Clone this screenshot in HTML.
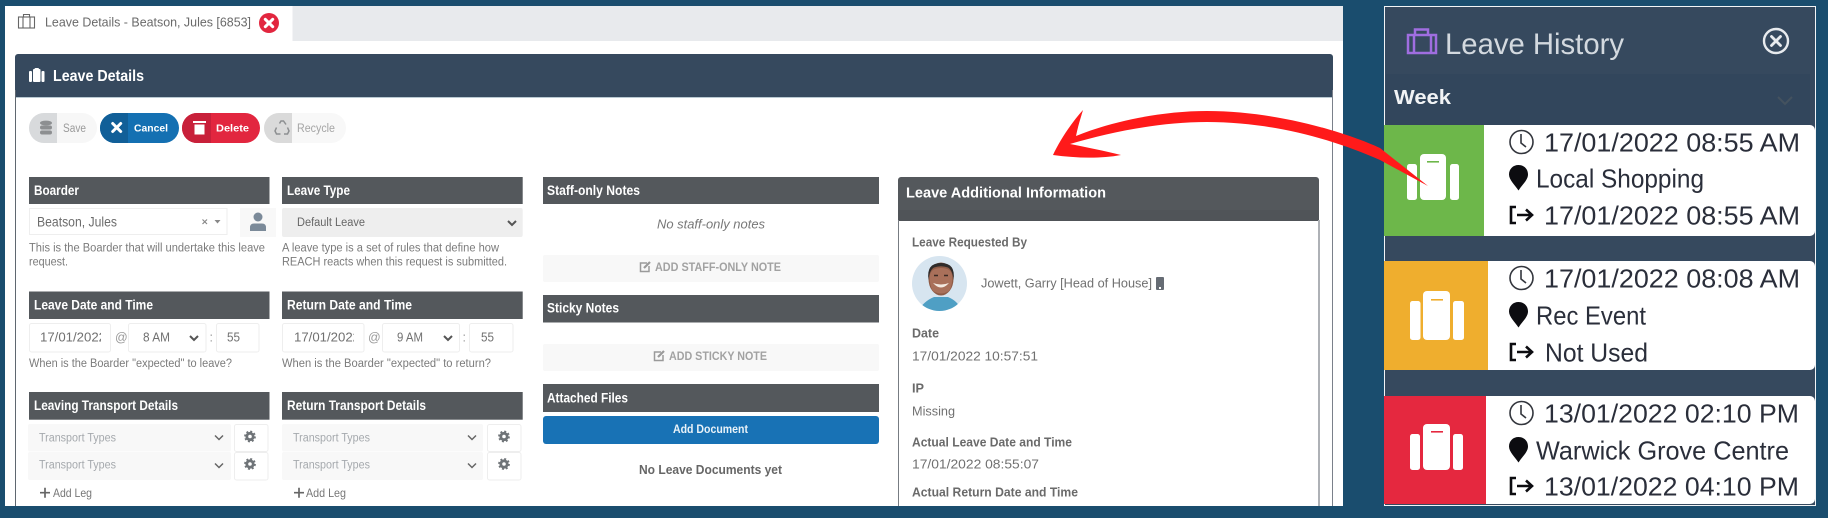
<!DOCTYPE html>
<html><head><meta charset="utf-8"><title>Leave Details</title>
<style>
html,body{margin:0;padding:0;width:1828px;height:518px;overflow:hidden;background:#1a4d6e}
svg{display:block;position:absolute;left:0;top:0;filter:blur(.35px)}
text{font-family:"Liberation Sans",sans-serif;white-space:pre}
.h{font-weight:bold;font-size:13.5px;fill:#fff}
.g{font-size:11.5px;fill:#7b7b7b}
.t{font-size:11.5px;fill:#a5a9ad}
.l{font-size:12.5px;fill:#6a6a6a;font-weight:bold}
.v{font-size:12.5px;fill:#707070}
.c{font-size:26px;fill:#2a2e3a}
.b{font-size:10.5px;font-weight:bold}
</style></head><body>
<svg width="1828" height="518" viewBox="0 0 1828 518" xmlns="http://www.w3.org/2000/svg">
<defs>
<clipPath id="d1"><rect x="29" y="323" width="72" height="29"/></clipPath>
<clipPath id="d2"><rect x="282" y="323" width="72" height="29"/></clipPath>
<clipPath id="av"><circle cx="939.5" cy="283.5" r="27.5"/></clipPath>
</defs>
<rect width="1828" height="518" fill="#1a4d6e"/>
<!-- left panel -->
<rect x="5" y="6" width="1338" height="500" fill="#fff"/>
<rect x="292.500" y="6" width="1050.500" height="35" fill="#e8eaed"/>
<!-- tab -->
<g fill="none" stroke="#666" stroke-width="1.100">
<rect x="18.500" y="17" width="16" height="11"/><path d="M23 17V28M30 17V28M23.500 17V14.500H29.500V17"/>
</g>
<text x="45" y="26.500" font-size="12.500" fill="#6a6a6a" textLength="206" lengthAdjust="spacingAndGlyphs">Leave Details - Beatson, Jules [6853]</text>
<circle cx="269" cy="23" r="10" fill="#e2263f"/>
<path d="M265.300 19.300L272.700 26.700M272.700 19.300L265.300 26.700" stroke="#fff" stroke-width="3" stroke-linecap="round"/>
<!-- main panel -->
<rect x="15" y="54" width="1318" height="44" rx="3" fill="#36495e"/>
<rect x="15" y="97" width="1318" height="1" fill="#b9c9d2"/>
<rect x="15" y="90" width="1" height="416" fill="#5f6770"/>
<rect x="1332" y="90" width="1" height="416" fill="#7a808a"/>
<g fill="#fff"><rect x="29" y="71" width="3" height="11" rx="1"/><rect x="33" y="69" width="7.500" height="13" rx="1"/><rect x="34.500" y="68" width="4.500" height="3" rx="1"/><rect x="41.500" y="71" width="3" height="11" rx="1"/></g>
<text x="53" y="81" font-size="15.500" font-weight="bold" fill="#fff" textLength="91" lengthAdjust="spacingAndGlyphs">Leave Details</text>
<!-- action buttons -->
<rect x="29" y="113" width="68" height="30" rx="15" fill="#f7f7f7"/><path d="M57 113H44a15 15 0 0 0 0 30H57Z" fill="#d8dadc"/>
<g fill="#8d8f91"><ellipse cx="46" cy="123" rx="6" ry="2.400"/><rect x="40" y="125.500" width="12" height="4" rx="2"/><rect x="40" y="130.500" width="12" height="4" rx="2"/></g>
<text x="63" y="132" font-size="11.500" fill="#9a9a9a" textLength="23" lengthAdjust="spacingAndGlyphs">Save</text>
<rect x="100" y="113" width="79" height="30" rx="15" fill="#1470b2"/><path d="M128 113H115a15 15 0 0 0 0 30H128Z" fill="#115f98"/>
<path d="M112.700 123.500L120.700 131.500M120.700 123.500L112.700 131.500" stroke="#fff" stroke-width="3" stroke-linecap="round"/>
<text class="b" x="134" y="131.500" fill="#fff" textLength="34" lengthAdjust="spacingAndGlyphs">Cancel</text>
<rect x="182" y="113" width="78" height="30" rx="15" fill="#e2263f"/><path d="M211 113H197a15 15 0 0 0 0 30H211Z" fill="#c8203a"/>
<path d="M193 121H206V123H193ZM194.500 124.500H204.500V134.500H194.500Z" fill="#fff"/>
<text class="b" x="216" y="131.500" fill="#fff" textLength="33" lengthAdjust="spacingAndGlyphs">Delete</text>
<rect x="264" y="113" width="82" height="30" rx="15" fill="#f8f8f8"/><path d="M292 113H279a15 15 0 0 0 0 30H292Z" fill="#dadada"/>
<path d="M279.500 123.500L281 121H283.500L286 124.500M287.500 127.500L289 131L287.500 134H284M280.500 134H276.500L275 131L276.500 127.500" fill="none" stroke="#8d8f91" stroke-width="1.500"/>
<text x="297" y="132" font-size="11.500" fill="#a5a5a5" textLength="38" lengthAdjust="spacingAndGlyphs">Recycle</text>

<!-- section headers -->
<g fill="#54585c">
<rect x="29" y="177" width="240.500" height="27"/><rect x="282" y="177" width="240.700" height="27"/><rect x="543" y="177" width="336" height="27"/>
<rect x="29" y="291.500" width="240.500" height="27.500"/><rect x="282" y="291.500" width="240.700" height="27.500"/><rect x="543" y="295" width="336" height="27.500"/>
<rect x="29" y="392" width="240.500" height="27.700"/><rect x="282" y="392" width="240.700" height="27.700"/><rect x="543" y="384" width="336" height="28"/>
</g>
<text class="h" x="34" y="195" textLength="45" lengthAdjust="spacingAndGlyphs">Boarder</text>
<text class="h" x="287" y="195" textLength="63" lengthAdjust="spacingAndGlyphs">Leave Type</text>
<text class="h" x="547" y="195" textLength="93" lengthAdjust="spacingAndGlyphs">Staff-only Notes</text>
<text class="h" x="34" y="309.500" textLength="119" lengthAdjust="spacingAndGlyphs">Leave Date and Time</text>
<text class="h" x="287" y="309.500" textLength="125" lengthAdjust="spacingAndGlyphs">Return Date and Time</text>
<text class="h" x="547" y="312.500" textLength="72" lengthAdjust="spacingAndGlyphs">Sticky Notes</text>
<text class="h" x="34" y="410" textLength="144" lengthAdjust="spacingAndGlyphs">Leaving Transport Details</text>
<text class="h" x="287" y="410" textLength="139" lengthAdjust="spacingAndGlyphs">Return Transport Details</text>
<text class="h" x="547" y="402.500" textLength="81" lengthAdjust="spacingAndGlyphs">Attached Files</text>

<!-- boarder row -->
<rect x="29.500" y="208.500" width="197.500" height="26" fill="#fff" stroke="#eee"/>
<text x="37" y="226.500" font-size="13.500" fill="#6c6c6c" textLength="80" lengthAdjust="spacingAndGlyphs">Beatson, Jules</text>
<path d="M202.500 219.500L207 224M207 219.500L202.500 224" stroke="#888" stroke-width="1.200"/>
<path d="M214.500 220H220.500L217.500 223.500Z" fill="#888"/>
<rect x="240" y="208" width="36" height="29" fill="#f8f8f8"/>
<circle cx="258" cy="217" r="4.500" fill="#7b8a99"/><path d="M250 231V227.500Q250 223.500 254 223.500H262Q266 223.500 266 227.500V231Z" fill="#7b8a99"/>
<rect x="282" y="208" width="240.700" height="29" rx="2" fill="#eeeeee"/>
<text x="297" y="226" font-size="11.500" fill="#666" textLength="68" lengthAdjust="spacingAndGlyphs">Default Leave</text>
<path d="M508 221L512 225L516 221" fill="none" stroke="#555" stroke-width="2"/>
<text class="g" x="29" y="251.500" textLength="236" lengthAdjust="spacingAndGlyphs">This is the Boarder that will undertake this leave</text>
<text class="g" x="29" y="265.500" textLength="39" lengthAdjust="spacingAndGlyphs">request.</text>
<text class="g" x="282" y="251.500" textLength="217" lengthAdjust="spacingAndGlyphs">A leave type is a set of rules that define how</text>
<text class="g" x="282" y="265.500" textLength="225" lengthAdjust="spacingAndGlyphs">REACH reacts when this request is submitted.</text>

<!-- date rows -->
<g fill="#fff" stroke="#eee">
<rect x="29.500" y="323.500" width="81" height="28.500" rx="2"/><rect x="128.500" y="323.500" width="77.500" height="28.500" rx="2"/><rect x="216.500" y="323.500" width="42.500" height="28.500" rx="2"/>
<rect x="282.500" y="323.500" width="81.500" height="28.500" rx="2"/><rect x="382.500" y="323.500" width="77" height="28.500" rx="2"/><rect x="469.500" y="323.500" width="43.500" height="28.500" rx="2"/>
</g>
<g clip-path="url(#d1)"><text class="v" x="40" y="341.500" textLength="66" lengthAdjust="spacingAndGlyphs">17/01/2022</text></g>
<g clip-path="url(#d2)"><text class="v" x="294" y="341.500" textLength="66" lengthAdjust="spacingAndGlyphs">17/01/2022</text></g>
<text class="v" x="115" y="341.500" style="fill:#999">@</text>
<text class="v" x="368" y="341.500" style="fill:#999">@</text>
<text class="v" x="143" y="341.500" textLength="27" lengthAdjust="spacingAndGlyphs">8 AM</text>
<text class="v" x="397" y="341.500" textLength="26" lengthAdjust="spacingAndGlyphs">9 AM</text>
<path d="M190 336L194 340L198 336M444 336L448 340L452 336" fill="none" stroke="#555" stroke-width="2"/>
<text class="v" x="209.500" y="341.500" style="fill:#999">:</text>
<text class="v" x="462.500" y="341.500" style="fill:#999">:</text>
<text class="v" x="227" y="341.500" textLength="13" lengthAdjust="spacingAndGlyphs">55</text>
<text class="v" x="481" y="341.500" textLength="13" lengthAdjust="spacingAndGlyphs">55</text>
<text class="g" x="29" y="367" textLength="203" lengthAdjust="spacingAndGlyphs">When is the Boarder "expected" to leave?</text>
<text class="g" x="282" y="367" textLength="209" lengthAdjust="spacingAndGlyphs">When is the Boarder "expected" to return?</text>

<!-- transport rows -->
<g fill="#f8f8f8">
<rect x="28" y="424" width="203" height="27.500" rx="2"/><rect x="28" y="452" width="203" height="28" rx="2"/>
<rect x="282" y="424" width="201" height="27.500" rx="2"/><rect x="282" y="452" width="201" height="28" rx="2"/>
</g>
<g fill="#fff" stroke="#eee">
<rect x="234.500" y="424.500" width="33.500" height="27" rx="2"/><rect x="234.500" y="452.500" width="33.500" height="27.500" rx="2"/>
<rect x="487.500" y="424.500" width="33.500" height="27" rx="2"/><rect x="487.500" y="452.500" width="33.500" height="27.500" rx="2"/>
</g>
<text class="t" x="39" y="441.500" textLength="77" lengthAdjust="spacingAndGlyphs">Transport Types</text>
<text class="t" x="39" y="468.500" textLength="77" lengthAdjust="spacingAndGlyphs">Transport Types</text>
<text class="t" x="293" y="441.500" textLength="77" lengthAdjust="spacingAndGlyphs">Transport Types</text>
<text class="t" x="293" y="468.500" textLength="77" lengthAdjust="spacingAndGlyphs">Transport Types</text>
<path d="M215 435.500L219 439.500L223 435.500M215 463.500L219 467.500L223 463.500M468 435.500L472 439.500L476 435.500M468 463.500L472 467.500L476 463.500" fill="none" stroke="#666" stroke-width="1.500"/>
<g fill="none" stroke="#6f7478">
<circle cx="250" cy="436.500" r="3.200" stroke-width="2.800"/><circle cx="250" cy="436.500" r="5" stroke-width="1.800" stroke-dasharray="2 1.930"/>
<circle cx="250" cy="464" r="3.200" stroke-width="2.800"/><circle cx="250" cy="464" r="5" stroke-width="1.800" stroke-dasharray="2 1.930"/>
<circle cx="504" cy="436.500" r="3.200" stroke-width="2.800"/><circle cx="504" cy="436.500" r="5" stroke-width="1.800" stroke-dasharray="2 1.930"/>
<circle cx="504" cy="464" r="3.200" stroke-width="2.800"/><circle cx="504" cy="464" r="5" stroke-width="1.800" stroke-dasharray="2 1.930"/>
</g>
<path d="M40 492.700H50M45 487.700V497.700M294 492.700H304M299 487.700V497.700" stroke="#666" stroke-width="1.700"/>
<text class="v" x="53" y="497" textLength="39" lengthAdjust="spacingAndGlyphs" style="fill:#777;font-size:12px">Add Leg</text>
<text class="v" x="306" y="497" textLength="40" lengthAdjust="spacingAndGlyphs" style="fill:#777;font-size:12px">Add Leg</text>

<!-- notes column -->
<text x="657" y="228.500" font-size="12.500" font-style="italic" fill="#777" textLength="108" lengthAdjust="spacingAndGlyphs">No staff-only notes</text>
<rect x="543" y="255" width="336" height="27" rx="2" fill="#f8f8f8"/>
<rect x="543" y="344" width="336" height="27" rx="2" fill="#f8f8f8"/>
<g fill="none" stroke="#9a9a9a" stroke-width="1.500"><path d="M647 263H640.500V271.500H649V266"/><path d="M644 268L650 262" stroke-width="2.200"/>
<path d="M661 352H654.500V360.500H663V355"/><path d="M658 357L664 351" stroke-width="2.200"/></g>
<text x="655" y="271" font-size="11.500" font-weight="bold" fill="#a2a2a2" textLength="126" lengthAdjust="spacingAndGlyphs">ADD STAFF-ONLY NOTE</text>
<text x="669" y="360" font-size="11.500" font-weight="bold" fill="#a2a2a2" textLength="98" lengthAdjust="spacingAndGlyphs">ADD STICKY NOTE</text>
<rect x="543" y="416" width="336" height="28" rx="3" fill="#1872b5"/>
<text x="673" y="433" font-size="12" font-weight="bold" fill="#e9f2f8" textLength="75" lengthAdjust="spacingAndGlyphs">Add Document</text>
<text x="639" y="474" font-size="12.500" font-weight="bold" fill="#666" textLength="143" lengthAdjust="spacingAndGlyphs">No Leave Documents yet</text>

<!-- additional information -->
<rect x="898" y="177" width="421" height="44" rx="3" fill="#54585c"/>
<rect x="898" y="210" width="421" height="11" fill="#505458"/>
<rect x="898" y="220" width="1" height="286" fill="#777c82"/>
<rect x="1318" y="220" width="2" height="286" fill="#aeb1b6"/>
<text x="906" y="197.500" font-size="14.500" font-weight="bold" fill="#fff" textLength="200" lengthAdjust="spacingAndGlyphs">Leave Additional Information</text>
<text class="l" x="912" y="246.500" textLength="115" lengthAdjust="spacingAndGlyphs">Leave Requested By</text>
<circle cx="939.500" cy="283.500" r="27.500" fill="#d7e5f0"/>
<g clip-path="url(#av)">
<path d="M918 311Q924 301 934 297H948Q958 301 962 311Z" fill="#4f9fc4"/>
<ellipse cx="941" cy="279" rx="12.500" ry="16.500" fill="#8f5b46"/>
<path d="M930 275Q931 268 941 268Q951 268 952 275Q953 285 949 291Q941 296 933 291Q929 285 930 275Z" fill="#a9705a"/>
<path d="M928.500 280Q926 263 941 263Q956 263 953.500 280Q952.500 270 948 267.500Q941 265 934 267.500Q929.500 270 928.500 280Z" fill="#2f2b2a"/>
<path d="M933 283Q941 292 949 283Q941 286 933 283Z" fill="#f3e9e0"/>
<path d="M934 275.500H938M944 275.500H948" stroke="#3a2a24" stroke-width="1.400"/>
</g>
<text class="v" x="981" y="287.500" textLength="171" lengthAdjust="spacingAndGlyphs">Jowett, Garry [Head of House]</text>
<rect x="1156" y="277" width="8" height="13" rx="1" fill="#666c74"/><rect x="1159" y="287" width="2" height="2" fill="#fff"/>
<text class="l" x="912" y="337.500" textLength="27" lengthAdjust="spacingAndGlyphs">Date</text>
<text class="v" x="912" y="360.500" textLength="126" lengthAdjust="spacingAndGlyphs">17/01/2022 10:57:51</text>
<text class="l" x="912" y="392.500" textLength="12" lengthAdjust="spacingAndGlyphs">IP</text>
<text class="v" x="912" y="415.500" textLength="43" lengthAdjust="spacingAndGlyphs">Missing</text>
<text class="l" x="912" y="446.500" textLength="160" lengthAdjust="spacingAndGlyphs">Actual Leave Date and Time</text>
<text class="v" x="912" y="468.500" textLength="127" lengthAdjust="spacingAndGlyphs">17/01/2022 08:55:07</text>
<text class="l" x="912" y="496.500" textLength="166" lengthAdjust="spacingAndGlyphs">Actual Return Date and Time</text>
<rect x="0" y="506" width="1384" height="12" fill="#1a4d6e"/>

<!-- right panel -->
<rect x="1384.500" y="6.500" width="431" height="499" fill="#36495e" stroke="#f2f4f6"/>
<rect x="1386" y="74" width="424" height="51" fill="#32465c"/>
<g fill="none" stroke="#a06ee0" stroke-width="2.500">
<rect x="1408" y="35" width="28" height="18"/><path d="M1414 35V53M1431 35V53M1415 35V29.500H1428V35"/>
</g>
<text x="1445" y="54" font-size="30" fill="#d3d9df" textLength="179" lengthAdjust="spacingAndGlyphs">Leave History</text>
<circle cx="1776" cy="41" r="12" fill="none" stroke="#e8ebee" stroke-width="2.400"/>
<path d="M1771.500 36.500L1780.500 45.500M1780.500 36.500L1771.500 45.500" stroke="#e8ebee" stroke-width="2.800" stroke-linecap="round"/>
<text x="1394" y="104" font-size="20" font-weight="bold" fill="#f1f3f5" textLength="57" lengthAdjust="spacingAndGlyphs">Week</text>
<path d="M1778 97L1785 104L1792 97" fill="none" stroke="#44525f" stroke-width="2"/>

<!-- card 1 -->
<rect x="1384" y="125" width="431" height="111" rx="5" fill="#fff"/>
<path d="M1384 125H1484V236H1384Z" fill="#6db74a"/>
<g fill="#fff"><rect x="1407" y="164" width="10" height="36" rx="2.500"/><rect x="1420" y="154" width="26" height="46" rx="4"/><rect x="1450" y="164" width="9" height="36" rx="2.500"/></g>
<rect x="1427" y="161" width="12" height="1.600" fill="#6db74a"/>
<!-- card 2 -->
<rect x="1384" y="261" width="431" height="109" rx="5" fill="#fff"/>
<path d="M1384 261H1488V370H1384Z" fill="#efae2e"/>
<g fill="#fff"><rect x="1410" y="301" width="10.500" height="39" rx="2.500"/><rect x="1423" y="291" width="27" height="49" rx="4"/><rect x="1453" y="301" width="11" height="39" rx="2.500"/></g>
<rect x="1431" y="299" width="12" height="1.600" fill="#efae2e"/>
<!-- card 3 -->
<rect x="1384" y="396" width="431" height="108" rx="5" fill="#fff"/>
<path d="M1384 396H1486V504H1384Z" fill="#e5283f"/>
<g fill="#fff"><rect x="1410" y="434" width="10" height="36" rx="2.500"/><rect x="1423" y="424" width="27" height="46" rx="4"/><rect x="1453" y="434" width="10" height="36" rx="2.500"/></g>
<rect x="1431" y="431" width="12" height="1.600" fill="#e5283f"/>

<!-- card icons -->
<g fill="none" stroke="#33363d" stroke-width="1.600">
<circle cx="1521.500" cy="142" r="11.500"/><path d="M1521 134V143L1526 147"/>
<circle cx="1521.500" cy="278" r="11.500"/><path d="M1521 270V279L1526 283"/>
<circle cx="1521.500" cy="413" r="11.500"/><path d="M1521 405V414L1526 418"/>
</g>
<g fill="#0c0c10">
<path d="M1518.500 165C1513 165 1509 169 1509 174.500C1509 180 1515 185 1518.500 190.500C1522 185 1528 180 1528 174.500C1528 169 1524 165 1518.500 165Z"/>
<path d="M1518.500 302C1513 302 1509 306 1509 311.500C1509 317 1515 322 1518.500 327.500C1522 322 1528 317 1528 311.500C1528 306 1524 302 1518.500 302Z"/>
<path d="M1518.500 437C1513 437 1509 441 1509 446.500C1509 452 1515 457 1518.500 462.500C1522 457 1528 452 1528 446.500C1528 441 1524 437 1518.500 437Z"/>
</g>
<g fill="none" stroke="#0c0c10" stroke-width="2.600">
<path d="M1516 207H1511V223H1516M1517 215H1531M1526 209.500L1532 215L1526 220.500"/>
<path d="M1516 344H1511V360H1516M1517 352H1531M1526 346.500L1532 352L1526 357.500"/>
<path d="M1516 478H1511V494H1516M1517 486H1531M1526 480.500L1532 486L1526 491.500"/>
</g>
<!-- card text -->
<text class="c" x="1544" y="151.500" textLength="256" lengthAdjust="spacingAndGlyphs">17/01/2022 08:55 AM</text>
<text class="c" x="1536" y="187.500" textLength="168" lengthAdjust="spacingAndGlyphs">Local Shopping</text>
<text class="c" x="1544" y="224.500" textLength="256" lengthAdjust="spacingAndGlyphs">17/01/2022 08:55 AM</text>
<text class="c" x="1544" y="287.500" textLength="256" lengthAdjust="spacingAndGlyphs">17/01/2022 08:08 AM</text>
<text class="c" x="1536" y="324.500" textLength="110" lengthAdjust="spacingAndGlyphs">Rec Event</text>
<text class="c" x="1545" y="361.500" textLength="103" lengthAdjust="spacingAndGlyphs">Not Used</text>
<text class="c" x="1544" y="422.500" textLength="255" lengthAdjust="spacingAndGlyphs">13/01/2022 02:10 PM</text>
<text class="c" x="1536" y="459.500" textLength="253" lengthAdjust="spacingAndGlyphs">Warwick Grove Centre</text>
<text class="c" x="1544" y="495.500" textLength="255" lengthAdjust="spacingAndGlyphs">13/01/2022 04:10 PM</text>

<!-- arrow -->
<path d="M1428 186L1380 148C1350 134 1280 111 1207 111C1160 111 1110 122 1076 136C1078 126 1081 117 1083 110C1072 122 1060 140 1053 155C1075 158 1100 159 1121 155C1105 151 1085 147 1070 144C1110 132 1160 122 1207 122C1270 122 1330 138 1380 160Z" fill="#ff1a1a"/>
</svg>
</body></html>
